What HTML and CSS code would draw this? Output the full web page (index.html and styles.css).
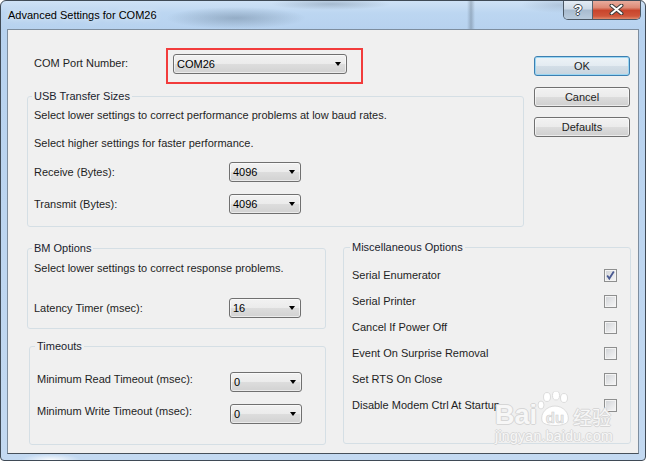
FILE: index.html
```html
<!DOCTYPE html>
<html>
  <head>
  <meta name="viewport" content="width=device-width, initial-scale=1.0">
  <meta charset="UTF-8">
  <link rel="stylesheet" href="styles.css">
  </head>
<body>

<div class="window">
    <div class="titlebar">
        <span class="title">Advanced Settings for COM26</span>
        <div class="caption">
            <span class="cap help">?</span>
            <span class="cap close">
                <svg width="15" height="11" viewBox="0 0 15 11">
                    <path d="M2.5 1.5 L12.5 9.5 M12.5 1.5 L2.5 9.5" stroke="#3d3d3d" stroke-width="4" stroke-linecap="round"/>
                    <path d="M2.5 1.5 L12.5 9.5 M12.5 1.5 L2.5 9.5" stroke="#ffffff" stroke-width="2" stroke-linecap="round"/>
                </svg>
            </span>
        </div>
    </div>

    <div class="client">
        <div class="top">
            <div class="top-left">
                <div class="port-row">
                    <span class="port-label">COM Port Number:</span>
                    <div class="highlight">
                        <div class="combo combo-wide"><span>COM26</span><i class="arrow"></i></div>
                    </div>
                </div>

                <fieldset class="group usb">
                    <legend>USB Transfer Sizes</legend>
                    <p class="line">Select lower settings to correct performance problems at low baud rates.</p>
                    <p class="line line-gap">Select higher settings for faster performance.</p>
                    <div class="field first">
                        <span class="field-label">Receive (Bytes):</span>
                        <div class="combo"><span>4096</span><i class="arrow"></i></div>
                    </div>
                    <div class="field">
                        <span class="field-label">Transmit (Bytes):</span>
                        <div class="combo"><span>4096</span><i class="arrow"></i></div>
                    </div>
                </fieldset>
            </div>

            <div class="buttons">
                <div class="btn btn-default">OK</div>
                <div class="btn">Cancel</div>
                <div class="btn">Defaults</div>
            </div>
        </div>

        <div class="bottom">
            <div class="bottom-left">
                <fieldset class="group bm">
                    <legend>BM Options</legend>
                    <p class="line">Select lower settings to correct response problems.</p>
                    <div class="field latency">
                        <span class="field-label">Latency Timer (msec):</span>
                        <div class="combo"><span>16</span><i class="arrow"></i></div>
                    </div>
                </fieldset>

                <fieldset class="group timeouts">
                    <legend>Timeouts</legend>
                    <div class="field top-aligned">
                        <span class="field-label">Minimum Read Timeout (msec):</span>
                        <div class="combo"><span>0</span><i class="arrow"></i></div>
                    </div>
                    <div class="field top-aligned">
                        <span class="field-label">Minimum Write Timeout (msec):</span>
                        <div class="combo"><span>0</span><i class="arrow"></i></div>
                    </div>
                </fieldset>
            </div>

            <fieldset class="group misc">
                <legend>Miscellaneous Options</legend>
                <div class="option"><span>Serial Enumerator</span>
                    <span class="check checked">
                        <svg width="11" height="11" viewBox="0 0 11 11"><path d="M2.2 5.6 L4.3 8.6 L8.8 1.6" fill="none" stroke="#4a5a92" stroke-width="1.8"/></svg>
                    </span>
                </div>
                <div class="option"><span>Serial Printer</span><span class="check"></span></div>
                <div class="option"><span>Cancel If Power Off</span><span class="check"></span></div>
                <div class="option"><span>Event On Surprise Removal</span><span class="check"></span></div>
                <div class="option"><span>Set RTS On Close</span><span class="check"></span></div>
                <div class="option"><span>Disable Modem Ctrl At Startup</span><span class="check"></span></div>
            </fieldset>
        </div>
    </div>

    <div class="watermark">
        <div class="wm-logo">
            <span class="wm-bai">Bai</span>
            <svg class="wm-paw" width="36" height="38" viewBox="0 0 36 38">
                <ellipse cx="10" cy="6" rx="3.5" ry="4.5" fill="#fff" stroke="#dcdcdc"/>
                <ellipse cx="19" cy="4.5" rx="3.5" ry="4.5" fill="#fff" stroke="#dcdcdc"/>
                <ellipse cx="27" cy="7" rx="3.5" ry="4.5" fill="#fff" stroke="#dcdcdc"/>
                <ellipse cx="4" cy="14" rx="3" ry="4" fill="#fff" stroke="#dcdcdc"/>
                <path d="M5 30 C3 22 10 15 18 15 C26 15 33 22 31 30 C30 36 6 36 5 30 Z" fill="#fff" stroke="#dcdcdc"/>
                <text x="18" y="32" text-anchor="middle" font-family="Liberation Sans" font-size="15" font-weight="bold" fill="#eeeeee" stroke="#d0d0d0" stroke-width="0.6">du</text>
            </svg>
            <span class="wm-cn">经验</span>
        </div>
        <div class="wm-url">jingyan.baidu.com</div>
    </div>
</div>

</body>
</html>
```

FILE: styles.css
```css
body{
margin: 0;
background-color: #ffffff;
font-family: "Liberation Sans", Arial, sans-serif;
font-size: 11px;
color: #1e1e1e;
}

.window{
box-sizing: border-box;
width: 646px;
height: 461px;
position: relative;
overflow: hidden;
display: flex;
flex-direction: column;
padding: 0 6px 6px;
border: 1px solid #3f4a56;
border-radius: 6px 6px 4px 4px;
background:
    radial-gradient(ellipse 70px 11px at 235px 17px, rgba(60,80,100,.30), rgba(60,80,100,0)),
    radial-gradient(ellipse 60px 6px at 330px 3px, rgba(70,90,110,.28), rgba(70,90,110,0)),
    radial-gradient(ellipse 40px 8px at 560px 4px, rgba(90,110,130,.22), rgba(90,110,130,0)),
    radial-gradient(ellipse 30px 6px at 50px 459px, rgba(255,255,255,.9), rgba(255,255,255,0)),
    linear-gradient(180deg, #cfe2f6 0, #bcd6f1 12px, #b7d2ef 28px, #c3d9f1 100%);
}

.window::before{
content: "";
position: absolute;
left: 466px;
top: 0;
width: 8px;
height: 28px;
background: linear-gradient(90deg, rgba(80,95,110,0), rgba(80,95,110,.35), rgba(80,95,110,0));
}

.titlebar{
height: 28px;
margin: 0 -6px;
display: flex;
align-items: center;
justify-content: space-between;
position: relative;
}

.title{
padding-left: 7px;
color: #000000;
text-shadow: 0 0 6px rgba(255,255,255,.9);
}

.caption{
align-self: flex-start;
margin-top: -1px;
margin-right: 4px;
display: flex;
height: 19px;
border: 1px solid #4c5864;
border-top: none;
border-radius: 0 0 5px 5px;
overflow: hidden;
}

.cap{
display: flex;
align-items: center;
justify-content: center;
height: 19px;
}

.help{
width: 28px;
border-right: 1px solid #56636f;
background: linear-gradient(180deg, #e6eef6 0, #cfdbe7 45%, #a9bccf 55%, #b9cbdc 100%);
color: #ffffff;
font-weight: bold;
font-size: 14px;
text-shadow: 1px 0 0 #404850, -1px 0 0 #404850, 0 1px 0 #404850, 0 -1px 0 #404850;
}

.close{
width: 47px;
background: linear-gradient(180deg, #eab1a3 0, #dd8a76 40%, #c9452c 55%, #d0563b 85%, #e08a6c 100%);
}

.client{
box-sizing: border-box;
height: 425px;
border: 1px solid #7d8d9e;
border-bottom-color: #46505a;
background-color: #f0f0f0;
}

/* top part */

.top{
display: flex;
padding-left: 19px;
}

.top-left{
width: 497px;
}

.port-row{
margin-top: 18px;
display: flex;
align-items: flex-start;
}

.port-label{
width: 132px;
padding-left: 7px;
margin-top: 8px;
line-height: 14px;
}

.highlight{
padding: 4px 14px 8px 5px;
border: 2px solid #f23c3c;
}

.buttons{
width: 96px;
margin-left: 10px;
margin-top: 26px;
display: flex;
flex-direction: column;
gap: 10.5px;
}

.btn{
box-sizing: border-box;
height: 20px;
line-height: 18px;
text-align: center;
border: 1px solid #707070;
border-radius: 3px;
background: linear-gradient(180deg, #f2f2f2 0, #ebebeb 50%, #dddddd 50%, #cfcfcf 100%);
box-shadow: inset 0 0 0 1px rgba(255,255,255,.6);
}

.btn-default{
border-color: #3c7fb1;
background: linear-gradient(180deg, #edf3f7 0, #e3ebf1 50%, #d3dee7 50%, #c7d4de 100%);
box-shadow: inset 0 0 0 1px #9bd6f2;
}

/* group boxes */

.group{
box-sizing: border-box;
margin: 0;
min-width: 0;
border: 1px solid #d5dfe5;
border-radius: 3px;
}

.group legend{
padding: 0 2px;
margin-left: -2px;
line-height: 14px;
color: #1a1d2e;
}

.line{
margin: 0;
line-height: 14px;
}

.usb{
width: 100%;
margin-top: 5px;
padding: 5px 6px 12px;
}

.line-gap{
margin-top: 14px;
}

.field{
display: flex;
align-items: center;
height: 20px;
margin-top: 12px;
}

.field-label{
width: 195px;
line-height: 14px;
}

.top-aligned{
align-items: flex-start;
}

.combo{
box-sizing: border-box;
width: 72px;
height: 20px;
display: flex;
align-items: center;
justify-content: space-between;
padding: 0 5px 0 3px;
border: 1px solid #707070;
border-radius: 3px;
background: linear-gradient(180deg, #f2f2f2 0, #ebebeb 50%, #dddddd 50%, #d2d2d2 100%);
box-shadow: inset 0 0 0 1px rgba(255,255,255,.55);
color: #000000;
}

.combo-wide{
width: 174px;
}

.arrow{
width: 0;
height: 0;
border-left: 3.5px solid transparent;
border-right: 3.5px solid transparent;
border-top: 4px solid #000000;
}

/* bottom part */

.bottom{
display: flex;
align-items: flex-start;
padding-left: 19px;
padding-top: 13px;
}

.bottom-left{
width: 299px;
}

.bm{
width: 299px;
margin-top: 1px;
padding: 6px 6px 10px;
}

.latency{
margin-top: 23px;
}

.timeouts{
width: 297px;
margin-top: 10px;
margin-left: 2px;
padding: 7px 6px 20px 7px;
}

.timeouts .field-label{
width: 193px;
}

.timeouts .field:first-of-type{
margin-top: 12px;
}

.misc{
width: 288px;
margin-left: 17px;
padding: 8px 13px 25px 8px;
}

.option{
display: flex;
align-items: center;
justify-content: space-between;
height: 26px;
line-height: 14px;
}

.check{
box-sizing: border-box;
width: 13px;
height: 13px;
display: flex;
align-items: center;
justify-content: center;
border: 1px solid #8e8f8f;
background: linear-gradient(135deg, #cfd2d6 0, #e6e7e9 55%, #f7f7f7 100%);
box-shadow: inset 0 0 0 1px #f4f4f4;
}

/* watermark */

.watermark{
position: absolute;
left: 494px;
top: 386px;
color: #ffffff;
pointer-events: none;
}

.wm-logo{
display: flex;
align-items: flex-end;
height: 42px;
}

.wm-bai{
font-size: 27px;
font-weight: bold;
line-height: 27px;
color: #f7f7f7;
text-shadow: 1px 0 0 #d6d6d6, -1px 0 0 #d6d6d6, 0 1px 0 #d6d6d6, 0 -1px 0 #d6d6d6;
}

.wm-paw{
margin-left: 0;
}

.wm-cn{
font-family: "Noto Sans CJK SC", sans-serif;
font-size: 19px;
line-height: 25px;
color: #f7f7f7;
text-shadow: 1px 0 0 #d6d6d6, -1px 0 0 #d6d6d6, 0 1px 0 #d6d6d6, 0 -1px 0 #d6d6d6;
}

.wm-url{
font-size: 14px;
line-height: 15px;
letter-spacing: 0.3px;
color: #f7f7f7;
text-shadow: 1px 0 0 #d9d9d9, -1px 0 0 #d9d9d9, 0 1px 0 #d9d9d9, 0 -1px 0 #d9d9d9;
}
```
